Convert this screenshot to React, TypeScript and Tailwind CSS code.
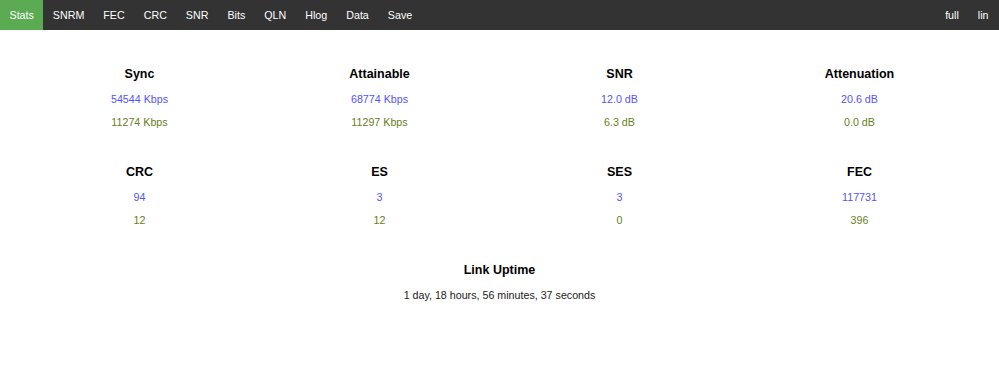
import React from 'react';

const tabs = ['Stats', 'SNRM', 'FEC', 'CRC', 'SNR', 'Bits', 'QLN', 'Hlog', 'Data', 'Save'];

const rows = [
  [
    { title: 'Sync', down: '54544 Kbps', up: '11274 Kbps' },
    { title: 'Attainable', down: '68774 Kbps', up: '11297 Kbps' },
    { title: 'SNR', down: '12.0 dB', up: '6.3 dB' },
    { title: 'Attenuation', down: '20.6 dB', up: '0.0 dB' },
  ],
  [
    { title: 'CRC', down: '94', up: '12' },
    { title: 'ES', down: '3', up: '12' },
    { title: 'SES', down: '3', up: '0' },
    { title: 'FEC', down: '117731', up: '396' },
  ],
];

const App = () => {
  return (
    <div className="min-h-[378px] bg-white font-['Liberation_Sans',Arial,sans-serif] text-[10.7px]">
      <nav className="flex h-[30px] bg-[#333333] text-white">
        {tabs.map((t, i) => (
          <a
            key={t}
            href="#"
            className={`flex items-center px-[9.5px] ${i === 0 ? 'bg-[#5aab52]' : ''}`}
          >
            {t}
          </a>
        ))}
        <div className="ml-auto flex">
          <a href="#" className="flex items-center px-[9.5px]">full</a>
          <a href="#" className="flex items-center pl-[9.5px] pr-[10.5px]">lin</a>
        </div>
      </nav>

      <div className="mx-auto max-w-[960px] pt-[34px]">
        {rows.map((row, r) => (
          <div key={r} className="mb-[28px] grid grid-cols-4">
            {row.map((s) => (
              <div key={s.title} className="flex flex-col items-center">
                <h3 className="text-[12.5px] font-bold leading-[20px] text-black">{s.title}</h3>
                <div className="mt-[4px] text-center leading-[23px]">
                  <div className="text-[#5252ff]">{s.down}</div>
                  <div className="text-[#667f22]">{s.up}</div>
                </div>
              </div>
            ))}
          </div>
        ))}
        <div className="flex flex-col items-center">
          <h3 className="text-[12.5px] font-bold leading-[20px] text-black">Link Uptime</h3>
          <div className="mt-[4px] leading-[23px] text-[#222]">1 day, 18 hours, 56 minutes, 37 seconds</div>
        </div>
      </div>
    </div>
  );
};

export default App;
